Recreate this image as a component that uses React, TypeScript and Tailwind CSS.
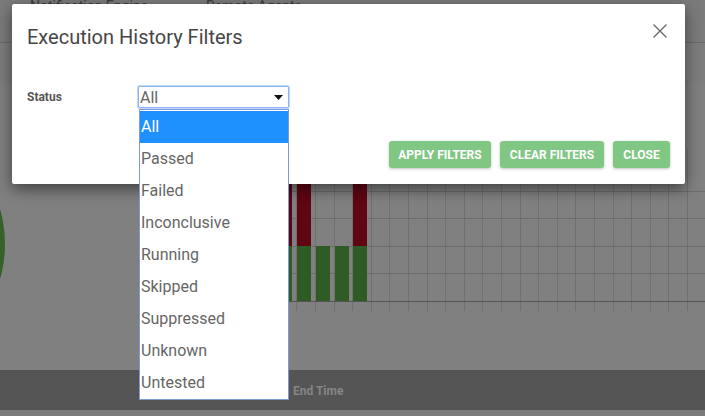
import React from "react";

const statuses = [
  "All",
  "Passed",
  "Failed",
  "Inconclusive",
  "Running",
  "Skipped",
  "Suppressed",
  "Unknown",
  "Untested",
];

// bars: x, has red part
const bars = [
  { x: 278, red: true },
  { x: 297, red: true },
  { x: 316, red: false },
  { x: 335, red: false },
  { x: 353, red: true },
];

function Chart() {
  const vlines: number[] = [];
  for (let x = 240.5; x < 705; x += 18.6) vlines.push(Math.round(x) + 0.5);
  const hlines = [192.5, 219.5, 247.5, 274.5];

  return (
    <svg width="705" height="284" viewBox="0 86 705 284" className="block">
      <circle cx="-120" cy="245" r="125" fill="#35612a" />
      {vlines.map((x) => (
        <line key={x} x1={x} y1={150} x2={x} y2={312} stroke="#707070" strokeWidth="1" />
      ))}
      {hlines.map((y) => (
        <line key={y} x1={230} y1={y} x2={705} y2={y} stroke="#6c6c6c" strokeWidth="1" />
      ))}
      {bars.map((b) => (
        <g key={b.x}>
          {b.red && <rect x={b.x} y={150} width={14} height={97} fill="#600512" />}
          <rect x={b.x} y={247} width={14} height={55} fill="#2f5b25" />
        </g>
      ))}
      <line x1={230} y1={302.5} x2={705} y2={302.5} stroke="#545454" strokeWidth="1" />
    </svg>
  );
}

export default function App() {
  return (
    <div className="relative w-[705px] h-[416px] overflow-hidden bg-[#808080] font-['Roboto','Liberation_Sans',sans-serif]">
      {/* page behind the modal */}
      <div className="h-[43px] bg-[#7b7b7b] border-b border-[#6a6a6a] flex gap-[58px] pl-[30px] text-[14px] text-[#3c3c3c]">
        <span className="-mt-[4px] leading-[20px]">Notification Engine</span>
        <span className="-mt-[4px] leading-[20px]">Remote Agents</span>
      </div>
      <div className="h-[42px] bg-[#7d7d7d]" />
      <div className="h-[285px]">
        <Chart />
      </div>
      <div className="h-[40px] bg-[#555555] flex items-center pl-[293px] pt-[2px]">
        <span className="text-[12px] font-bold text-[#858585]">End Time</span>
      </div>
      <div className="h-[6px] bg-[#7b7b7b]" />

      {/* modal */}
      <div className="absolute left-[12px] top-[4px] w-[673px] h-[180px] bg-white rounded-[2px] shadow-[0_5px_15px_rgba(0,0,0,0.5)] flex flex-col">
        <div className="flex items-start justify-between pt-[21px] pl-[15px] pr-[18px]">
          <h2 className="text-[20px] leading-[24px] text-[#464646] font-normal">
            Execution History Filters
          </h2>
          <svg width="14" height="14" viewBox="0 0 14 14" className="mt-[-1px]">
            <path d="M0.5 0.5 L13.5 13.5 M13.5 0.5 L0.5 13.5" stroke="#6b6b6b" strokeWidth="1.4" fill="none" />
          </svg>
        </div>

        <div className="flex items-center mt-[37px] pl-[15px]">
          <span className="w-[111px] text-[12px] font-bold text-[#555]">Status</span>
          <div className="relative">
            <div className="w-[151px] h-[22px] border border-[#8fb3f2] rounded-[1px] flex items-center justify-between pl-[1px] pr-[5px] outline outline-1 outline-[#c5d8fa]">
              <span className="text-[16px] leading-[20px] text-[#666] mt-[1px]">All</span>
              <svg width="9" height="5" viewBox="0 0 9 5">
                <path d="M0 0 L9 0 L4.5 5 Z" fill="#111" />
              </svg>
            </div>
            <ul className="absolute left-[1px] top-[23px] w-[150px] bg-white border border-[#7d9bd2] pt-[1px] z-10">
              {statuses.map((s, i) => (
                <li
                  key={s}
                  className={
                    i === 0
                      ? "h-[32px] flex items-center pl-[1px] text-[16px] bg-[#1e90ff] text-white"
                      : "h-[32px] flex items-center pl-[1px] text-[16px] text-[#666]"
                  }
                >
                  {s}
                </li>
              ))}
            </ul>
          </div>
        </div>

        <div className="flex justify-end gap-[9px] mt-[33px] pr-[15px]">
          <button className="w-[102px] h-[27px] bg-[#81c784] text-white text-[12px] font-bold rounded-[3px] shadow-[0_1px_3px_rgba(0,0,0,0.25)]">
            APPLY FILTERS
          </button>
          <button className="w-[104px] h-[27px] bg-[#81c784] text-white text-[12px] font-bold rounded-[3px] shadow-[0_1px_3px_rgba(0,0,0,0.25)]">
            CLEAR FILTERS
          </button>
          <button className="w-[57px] h-[27px] bg-[#81c784] text-white text-[12px] font-bold rounded-[3px] shadow-[0_1px_3px_rgba(0,0,0,0.25)]">
            CLOSE
          </button>
        </div>
      </div>
    </div>
  );
}
